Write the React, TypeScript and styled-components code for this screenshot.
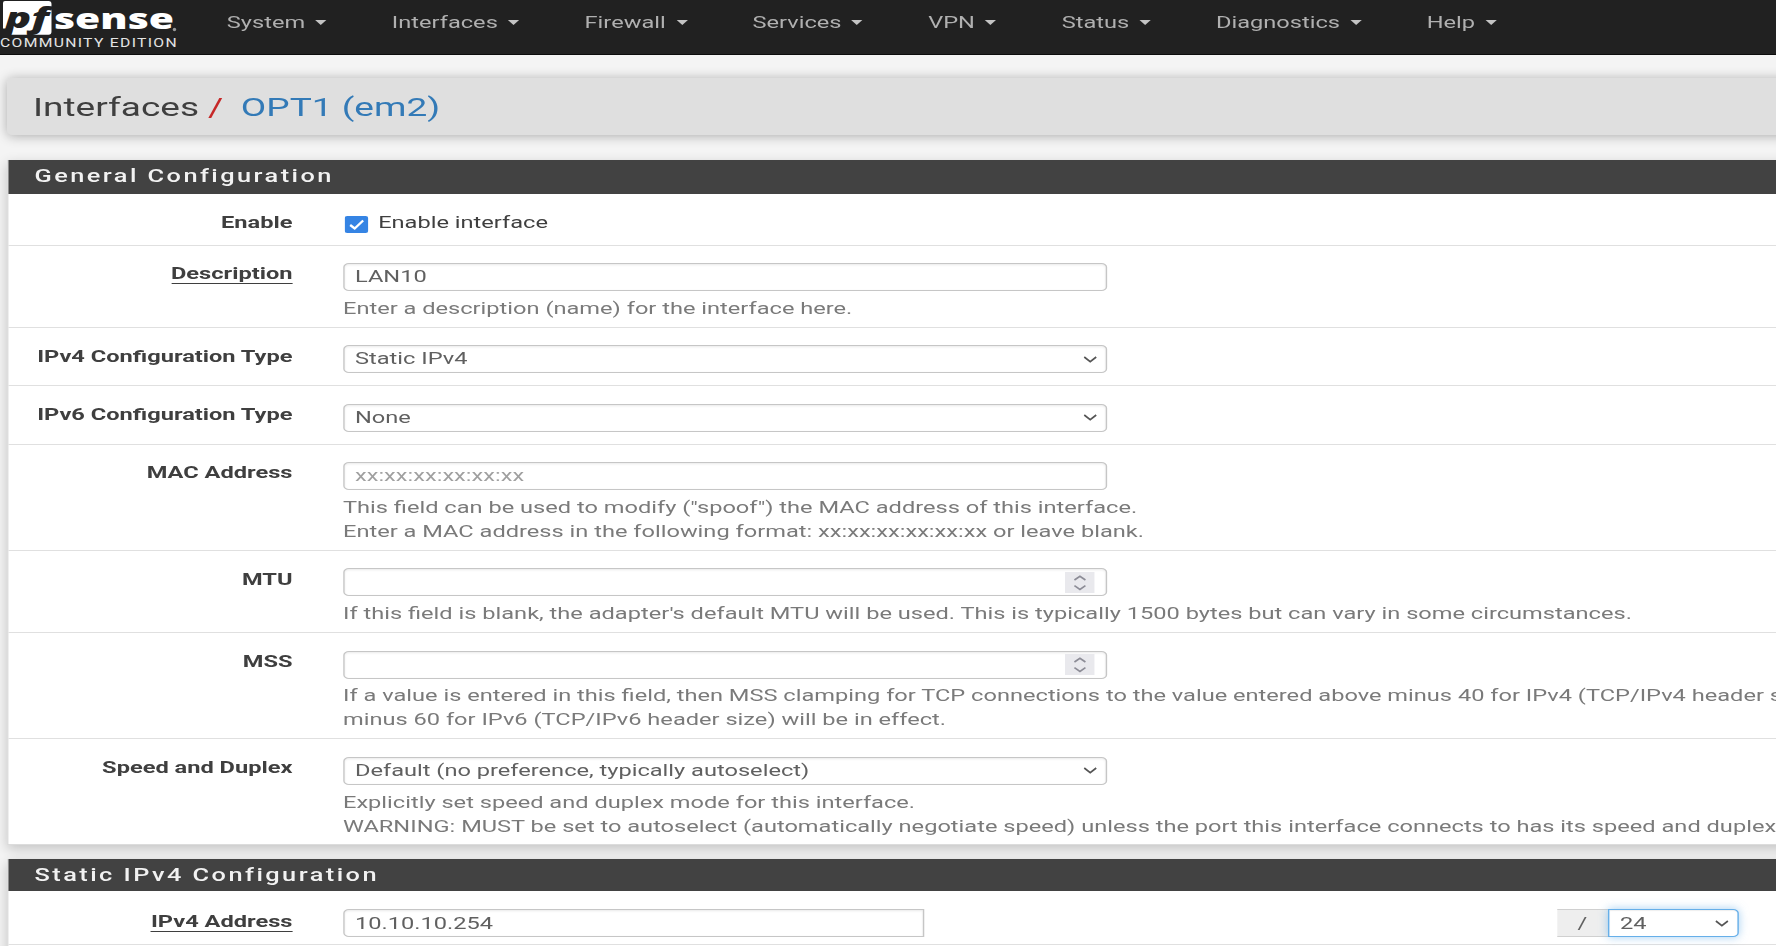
import React from "react";
import styled, { createGlobalStyle, css } from "styled-components";

const STRETCH = 1.4068;
const w = (n: number) => `${(n / STRETCH).toFixed(3)}px`;

const GlobalStyle = createGlobalStyle`
  *, *::before, *::after { box-sizing: border-box; }
  html, body { margin: 0; padding: 0; background: #f4f4f4; overflow: hidden; }
`;

const Viewport = styled.div`
  width: 1776px;
  height: 946px;
  overflow: hidden;
  background: #f4f4f4;
`;

const Page = styled.div`
  width: ${w(1776)};
  height: 946px;
  transform: scaleX(${STRETCH});
  transform-origin: 0 0;
  font-family: Roboto, "Liberation Sans", sans-serif;
  font-size: 16.8px;
  line-height: 24px;
  color: #3f3f3f;
`;

const Navbar = styled.nav`
  display: flex;
  width: ${w(1790)};
  height: 55px;
  background: #212121;
  border-bottom: 1px solid #0c0c0c;
`;

const Logo = styled.svg`
  display: block;
  flex: none;
  width: ${w(180)};
  height: 54px;
`;

const Menu = styled.ul`
  display: flex;
  list-style: none;
  margin: 0;
  padding: 0 0 0 ${w(46.8)};
  gap: ${w(65.2)};
`;

const MenuItem = styled.li`
  display: flex;
  align-items: center;
  height: 44px;
  gap: ${w(10.3)};
  color: #b0b0b0;
  white-space: nowrap;
`;

const Caret = styled.span`
  margin-top: 1px;
  border-top: 5px solid #c4c4c4;
  border-left: ${w(7)} solid transparent;
  border-right: ${w(7)} solid transparent;
`;

const Breadcrumb = styled.header`
  display: flex;
  align-items: center;
  margin: 23px 0 0 ${w(7.5)};
  width: ${w(1790)};
  height: 57px;
  padding-left: ${w(25.5)};
  background: #dfdfdf;
  border-radius: 4px;
  box-shadow: 0 1px 10px rgba(0, 0, 0, 0.3);
  font-size: 26.3px;
  line-height: 36px;
  white-space: pre;
`;

const Slash = styled.span`
  color: #c62828;
  margin: 0 ${w(17.5)} 0 ${w(9)};
`;

const Current = styled.span`
  color: #337ab7;
`;

const Panel = styled.section<{ $top: number }>`
  margin: ${(p) => p.$top}px 0 0 ${w(7.4)};
  width: ${w(1790)};
  background: #fff;
  border: 1px solid #dcdcdc;
  border-top: 0;
  box-shadow: 0 4px 10px rgba(0, 0, 0, 0.2);
`;

const PanelTitle = styled.h2<{ $height: number; $drop?: number }>`
  margin: 0;
  height: ${(p) => p.$height}px;
  padding-left: ${w(25.7)};
  background: #424242;
  color: #f2f2f2;
  font-size: 18px;
  font-weight: 500;
  line-height: ${(p) => p.$height - 2 + (p.$drop ?? 0)}px;
  letter-spacing: 1.75px;
`;

const Row = styled.div<{ $height: number; $pad?: number }>`
  display: flex;
  height: ${(p) => p.$height}px;
  padding-top: ${(p) => p.$pad ?? 17.5}px;
  border-bottom: 1px solid #e0e0e0;
  &:last-child { border-bottom-color: transparent; }
`;

const Label = styled.div<{ $lift?: number }>`
  flex: none;
  width: ${w(283.7)};
  margin-right: ${w(50.5)};
  margin-top: ${(p) => -(p.$lift ?? 1.8)}px;
  text-align: right;
  font-weight: 700;
`;

const Required = styled.span`
  display: inline-block;
  line-height: 20px;
  height: 21px;
  border-bottom: 1.5px solid #3f3f3f;
`;

const Body = styled.div`
  flex: 1;
  min-width: 0;
`;

const control = css`
  display: flex;
  align-items: center;
  height: 28px;
  padding: 0 ${w(10.6)};
  border: 1px solid #c6c6c6;
  background: #fff;
  color: #606060;
  box-shadow: inset 0 1px 2px rgba(0, 0, 0, 0.09);
`;

const Field = styled.div<{ $muted?: boolean }>`
  ${control}
  width: ${w(764)};
  border-radius: 4px;
  padding-bottom: 2px;
  justify-content: space-between;
  ${(p) => p.$muted && "color: #a0a0a0;"}
`;

const Address = styled.div`
  ${control}
  width: ${w(581.5)};
  border-radius: 4px 0 0 4px;
`;

const Addon = styled.div`
  display: flex;
  align-items: center;
  justify-content: center;
  width: ${w(51)};
  height: 28px;
  margin-left: auto;
  background: #eee;
  border: solid #d0d0d0;
  border-width: 1px 0;
  color: #606060;
`;

const Prefix = styled.div`
  ${control}
  width: ${w(131.5)};
  margin-right: ${w(56.6)};
  border-color: #66afe9;
  border-radius: 0 4px 4px 0;
  justify-content: space-between;
  box-shadow: inset 0 1px 1px rgba(0, 0, 0, 0.07), 0 0 8px rgba(102, 175, 233, 0.6);
`;

const Group = styled.div`
  display: flex;
`;

const Help = styled.p`
  margin: 4.8px 0 0;
  color: #7a7a7a;
  white-space: nowrap;
`;

const CheckLine = styled.div`
  display: flex;
  align-items: center;
  gap: ${w(9.6)};
  margin-top: -1px;
`;

const CheckBox = styled.svg`
  display: block;
  width: ${w(23.5)};
  height: 17px;
  margin: 5px 0 0 ${w(2.1)};
`;

const ChevronIcon = styled.svg`
  display: block;
  width: ${w(14)};
  height: 7px;
  margin-top: 2px;
  margin-right: ${w(-2)};
`;

const SpinnerBox = styled.svg`
  display: block;
  width: ${w(30)};
  height: 21px;
  margin-top: 2px;
`;

const Chevron = () => (
  <ChevronIcon viewBox="0 0 14 7" preserveAspectRatio="none">
    <path d="M1 1 L7 5.6 L13 1" fill="none" stroke="#555" strokeWidth="1.7" />
  </ChevronIcon>
);

const Spinner = () => (
  <SpinnerBox viewBox="0 0 30 21" preserveAspectRatio="none">
    <rect width="30" height="21" fill="#e9e9ed" />
    <path d="M9.5 8 L15 4.2 L20.5 8 M9.5 13.6 L15 17.4 L20.5 13.6" fill="none" stroke="#8c8c96" strokeWidth="1.7" />
  </SpinnerBox>
);

const Brand = () => (
  <Logo viewBox="0 0 180 54" preserveAspectRatio="none">
    <path d="M5 1 H48.500 Q51.500 1 51.500 4 V31.500 Q51.500 34.700 48.500 34.700 H7 L8.500 28.500 H3 V3 Q3 1 5 1 Z" fill="#fff" />
    <text x="5" y="28" fill="#212121" fontFamily="Open Sans, sans-serif" fontWeight="800" fontStyle="italic" fontSize="29" textLength="44" lengthAdjust="spacingAndGlyphs">pf</text>
    <text x="54" y="28.700" fill="#fff" fontFamily="Open Sans, sans-serif" fontWeight="800" fontSize="29" textLength="120" lengthAdjust="spacingAndGlyphs">sense</text>
    <circle cx="174.500" cy="29.500" r="1.700" fill="#999" />
    <text x="0" y="47" fill="#e4e4e4" fontFamily="Roboto, sans-serif" fontSize="12" textLength="178" lengthAdjust="spacingAndGlyphs" letterSpacing="1">COMMUNITY EDITION</text>
  </Logo>
);

const menus = ["System", "Interfaces", "Firewall", "Services", "VPN", "Status", "Diagnostics", "Help"];

export default function App() {
  return (
    <Viewport>
      <GlobalStyle />
      <Page>
        <Navbar>
          <Brand />
          <Menu>
            {menus.map((m) => (
              <MenuItem key={m}>{m}<Caret /></MenuItem>
            ))}
          </Menu>
        </Navbar>
        <Breadcrumb>
          Interfaces<Slash>/</Slash><Current>OPT1 (em2)</Current>
        </Breadcrumb>
        <Panel $top={25}>
          <PanelTitle $height={33.5} $drop={1}>General Configuration</PanelTitle>
          <Row $height={52} $pad={17}>
            <Label $lift={0.8}>Enable</Label>
            <Body>
              <CheckLine>
                <CheckBox viewBox="0 0 23.5 17" preserveAspectRatio="none">
                  <rect width="23.5" height="17" rx="2.5" ry="2" fill="#3584e4" />
                  <path d="M5.500 9 L10 12.500 L18.500 4.500" fill="none" stroke="#fff" strokeWidth="2.4" />
                </CheckBox>
                Enable interface
              </CheckLine>
            </Body>
          </Row>
          <Row $height={82.2}>
            <Label><Required>Description</Required></Label>
            <Body>
              <Field>LAN10</Field>
              <Help>Enter a description (name) for the interface here.</Help>
            </Body>
          </Row>
          <Row $height={58.5}>
            <Label $lift={1.2}>IPv4 Configuration Type</Label>
            <Body><Field>Static IPv4<Chevron /></Field></Body>
          </Row>
          <Row $height={58.5}>
            <Label>IPv6 Configuration Type</Label>
            <Body><Field>None<Chevron /></Field></Body>
          </Row>
          <Row $height={106.2}>
            <Label>MAC Address</Label>
            <Body>
              <Field $muted>xx:xx:xx:xx:xx:xx</Field>
              <Help>
                This field can be used to modify ("spoof") the MAC address of this interface.<br />
                Enter a MAC address in the following format: xx:xx:xx:xx:xx:xx or leave blank.
              </Help>
            </Body>
          </Row>
          <Row $height={82.2}>
            <Label>MTU</Label>
            <Body>
              <Field><span /><Spinner /></Field>
              <Help>If this field is blank, the adapter's default MTU will be used. This is typically 1500 bytes but can vary in some circumstances.</Help>
            </Body>
          </Row>
          <Row $height={106.3}>
            <Label>MSS</Label>
            <Body>
              <Field><span /><Spinner /></Field>
              <Help>
                If a value is entered in this field, then MSS clamping for TCP connections to the value entered above minus 40 for IPv4 (TCP/IPv4 header size) and<br />
                minus 60 for IPv6 (TCP/IPv6 header size) will be in effect.
              </Help>
            </Body>
          </Row>
          <Row $height={104.9}>
            <Label>Speed and Duplex</Label>
            <Body>
              <Field>Default (no preference, typically autoselect)<Chevron /></Field>
              <Help>
                Explicitly set speed and duplex mode for this interface.<br />
                WARNING: MUST be set to autoselect (automatically negotiate speed) unless the port this interface connects to has its speed and duplex forced.
              </Help>
            </Body>
          </Row>
        </Panel>
        <Panel $top={13.5}>
          <PanelTitle $height={32.5} $drop={2}>Static IPv4 Configuration</PanelTitle>
          <Row $height={53.5}>
            <Label $lift={-0.3}><Required>IPv4 Address</Required></Label>
            <Body>
              <Group>
                <Address>10.10.10.254</Address>
                <Addon>/</Addon>
                <Prefix>24<Chevron /></Prefix>
              </Group>
            </Body>
          </Row>
          <Row $height={40} />
        </Panel>
      </Page>
    </Viewport>
  );
}
